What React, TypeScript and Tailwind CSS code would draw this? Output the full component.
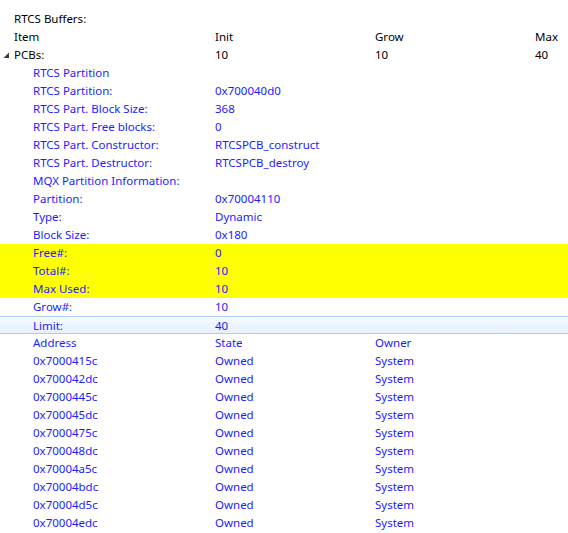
import React from "react";

type Row = {
  label: string;
  init?: string;
  grow?: string;
  max?: string;
  child?: boolean;
  tone?: "black" | "blue";
  bg?: "yellow" | "sel";
  expander?: boolean;
};

const rows: Row[] = [
  { label: "RTCS Buffers:", tone: "black" },
  { label: "Item", init: "Init", grow: "Grow", max: "Max", tone: "black" },
  { label: "PCBs:", init: "10", grow: "10", max: "40", tone: "black", expander: true },
  { label: "RTCS Partition", child: true },
  { label: "RTCS Partition:", init: "0x700040d0", child: true },
  { label: "RTCS Part. Block Size:", init: "368", child: true },
  { label: "RTCS Part. Free blocks:", init: "0", child: true },
  { label: "RTCS Part. Constructor:", init: "RTCSPCB_construct", child: true },
  { label: "RTCS Part. Destructor:", init: "RTCSPCB_destroy", child: true },
  { label: "MQX Partition Information:", child: true },
  { label: "Partition:", init: "0x70004110", child: true },
  { label: "Type:", init: "Dynamic", child: true },
  { label: "Block Size:", init: "0x180", child: true },
  { label: "Free#:", init: "0", child: true, bg: "yellow" },
  { label: "Total#:", init: "10", child: true, bg: "yellow" },
  { label: "Max Used:", init: "10", child: true, bg: "yellow" },
  { label: "Grow#:", init: "10", child: true },
  { label: "Limit:", init: "40", child: true, bg: "sel" },
  { label: "Address", init: "State", grow: "Owner", child: true },
  ...[
    "0x7000415c",
    "0x700042dc",
    "0x7000445c",
    "0x700045dc",
    "0x7000475c",
    "0x700048dc",
    "0x70004a5c",
    "0x70004bdc",
    "0x70004d5c",
    "0x70004edc",
  ].map((a) => ({ label: a, init: "Owned", grow: "System", child: true } as Row)),
];

export default function App() {
  return (
    <div
      className="w-[568px] h-[533px] bg-white pt-[10px] overflow-hidden text-[11.5px] leading-[18px]"
      style={{ fontFamily: '"Noto Sans", "Open Sans", Arial, sans-serif' }}
    >
      {rows.map((r, i) => {
        const color = r.tone === "black" ? "text-[#000000]" : "text-[#1c1cff]";
        const bg =
          r.bg === "yellow"
            ? "bg-[#ffff00] h-[18px]"
            : r.bg === "sel"
            ? "bg-gradient-to-b from-[#f7fbff] to-[#e6f0fd] border-y border-[#a9cdf7] h-[18px]"
            : "h-[18px]";
        return (
          <div key={i} className={`grid grid-cols-[14px_201px_160px_160px_1fr] items-center whitespace-nowrap ${bg} ${color}`}>
            <div className="flex items-center justify-center h-full">
              {r.expander && (
                <svg width="7" height="7" viewBox="0 0 7 7" className="ml-[-2px] mt-[1px]">
                  <path d="M6 0.5 L6 6 L0.5 6 Z" fill="#3c3c3c" />
                </svg>
              )}
            </div>
            <div className={r.child ? "pl-[19px]" : ""}>{r.label}</div>
            <div>{r.init ?? ""}</div>
            <div>{r.grow ?? ""}</div>
            <div>{r.max ?? ""}</div>
          </div>
        );
      })}
    </div>
  );
}
